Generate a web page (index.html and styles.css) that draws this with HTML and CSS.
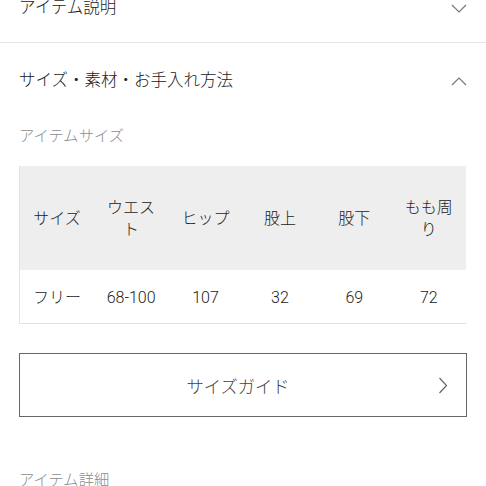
FILE: index.html
```html
<!DOCTYPE html>
<html lang="ja">
<head>
<meta charset="utf-8">
<link rel="stylesheet" href="styles.css">
</head>
<body>
<div class="page">
  <div class="acc acc-first">
    <span class="acc-title">アイテム説明</span>
    <svg class="chev" width="16" height="9" viewBox="0 0 16 9"><path d="M1 1 L8 8 L15 1" fill="none" stroke="#777" stroke-width="1.2"/></svg>
  </div>
  <div class="acc acc-open">
    <span class="acc-title">サイズ・素材・お手入れ方法</span>
    <svg class="chev" width="16" height="9" viewBox="0 0 16 9"><path d="M1 8 L8 1 L15 8" fill="none" stroke="#777" stroke-width="1.2"/></svg>
  </div>
  <div class="content">
    <div class="label">アイテムサイズ</div>
    <div class="table-wrap">
      <table class="size-table">
        <thead>
          <tr>
            <th>サイズ</th>
            <th>ウエスト</th>
            <th>ヒップ</th>
            <th>股上</th>
            <th>股下</th>
            <th>もも周り</th>
          </tr>
        </thead>
        <tbody>
          <tr>
            <td>フリー</td>
            <td>68-100</td>
            <td>107</td>
            <td>32</td>
            <td>69</td>
            <td>72</td>
          </tr>
        </tbody>
      </table>
    </div>
    <div class="guide-btn">
      <span class="guide-text">サイズガイド</span>
      <svg class="chev-r" width="10" height="17" viewBox="0 0 10 17"><path d="M1.5 1 L8.5 8.5 L1.5 16" fill="none" stroke="#666" stroke-width="1.2"/></svg>
    </div>
    <div class="label label-detail">アイテム詳細</div>
  </div>
</div>
</body>
</html>
```
FILE: styles.css
```css
html, body {
  margin: 0;
  padding: 0;
  background: #fff;
}
body {
  font-family: Roboto, "Noto Sans CJK JP", sans-serif;
  font-weight: 300;
  color: #222;
  overflow: hidden;
}
.page {
  width: 486px;
}
.acc {
  display: flex;
  align-items: center;
  justify-content: space-between;
  padding: 0 19px 0 19px;
}
.acc-title {
  font-size: 16.5px;
  line-height: 24px;
  color: #222;
}
.chev {
  display: block;
}
.acc-first {
  margin-top: -4px;
  padding-bottom: 22px;
  border-bottom: 1px solid #e6e6e6;
}
.acc-open {
  padding-top: 26px;
}
.content {
  padding: 0 19px;
}
.label {
  font-size: 15.3px;
  line-height: 22px;
  color: #8c8c8c;
  margin-top: 32px;
}
.table-wrap {
  margin-top: 19px;
  width: 447px;
  overflow: hidden;
}
.size-table {
  width: 447px;
  table-layout: fixed;
  border-collapse: collapse;
  border-left: 1px solid #e3e3e3;
  border-bottom: 1px solid #e3e3e3;
}
.size-table th {
  background: #eeeeee;
  font-weight: 300;
  font-size: 16px;
  line-height: 22px;
  height: 102px;
  padding: 2px 12px 0;
  color: #222;
  text-align: center;
  vertical-align: middle;
}
.size-table td {
  font-size: 16px;
  line-height: 22px;
  height: 50px;
  padding: 3px 4px 0;
  text-align: center;
  vertical-align: middle;
  color: #222;
}
.guide-btn {
  margin-top: 29px;
  height: 62px;
  border: 1px solid #666;
  display: flex;
  align-items: center;
  justify-content: center;
  position: relative;
  padding-right: 10px;
  font-size: 17.3px;
  color: #444;
}
.chev-r {
  position: absolute;
  right: 18px;
  top: 23px;
}
.label-detail {
  margin-top: 52px;
}
```
